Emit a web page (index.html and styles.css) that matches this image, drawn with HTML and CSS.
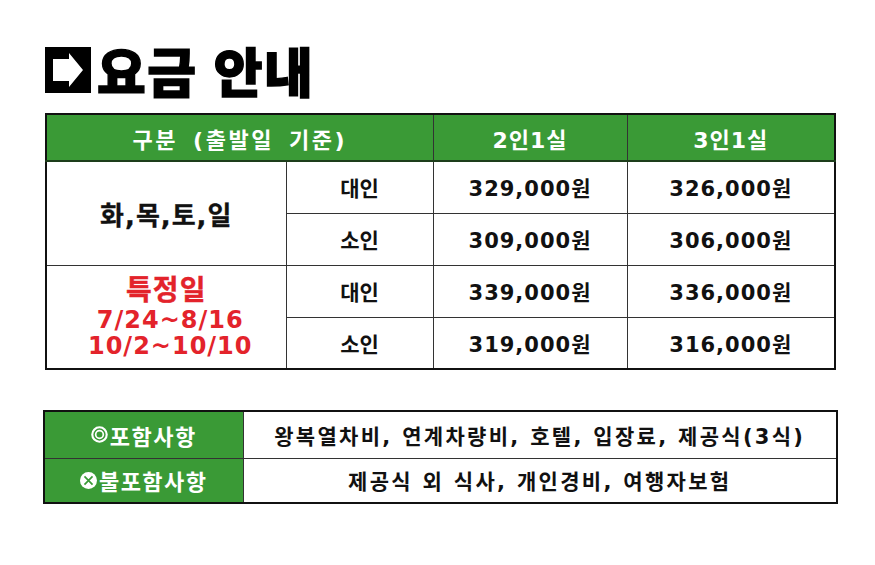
FILE: index.html
```html
<!DOCTYPE html>
<html lang="ko">
<head>
<meta charset="utf-8">
<link rel="stylesheet" href="styles.css">
</head>
<body>
<div class="page">
  <h1 class="title">
    <svg class="title-icon" viewBox="0 0 46 46" width="46" height="46">
      <rect x="0" y="0" width="46" height="46" fill="#000"/>
      <polygon points="8,12 24,12 24,6 38,23 24,40 24,34 8,34" fill="#fff"/>
    </svg>
    <span class="title-text">요금 안내</span>
  </h1>

  <table class="price">
    <colgroup>
      <col class="c1"><col class="c2"><col class="c3"><col class="c4">
    </colgroup>
    <thead>
      <tr class="head">
        <th colspan="2" class="h-wide">구분 (출발일 기준)</th>
        <th>2인1실</th>
        <th>3인1실</th>
      </tr>
    </thead>
    <tbody>
      <tr>
        <td rowspan="2" class="days">화,목,토,일</td>
        <td class="who">대인</td>
        <td class="amt">329,000원</td>
        <td class="amt">326,000원</td>
      </tr>
      <tr>
        <td class="who">소인</td>
        <td class="amt">309,000원</td>
        <td class="amt">306,000원</td>
      </tr>
      <tr>
        <td rowspan="2" class="special">
          <div class="sp-title">특정일</div>
          <div class="sp-date">7/24~8/16</div>
          <div class="sp-date">10/2~10/10</div>
        </td>
        <td class="who">대인</td>
        <td class="amt">339,000원</td>
        <td class="amt">336,000원</td>
      </tr>
      <tr>
        <td class="who">소인</td>
        <td class="amt">319,000원</td>
        <td class="amt">316,000원</td>
      </tr>
    </tbody>
  </table>

  <table class="incl">
    <colgroup><col class="k1"><col class="k2"></colgroup>
    <tr>
      <th><span class="label"><svg class="mark" viewBox="0 0 16 16"><circle cx="8" cy="8" r="6.8" fill="none" stroke="#fff" stroke-width="2"/><circle cx="8" cy="8" r="3.6" fill="none" stroke="#fff" stroke-width="1.6"/></svg>포함사항</span></th>
      <td>왕복열차비, 연계차량비, 호텔, 입장료, 제공식(3식)</td>
    </tr>
    <tr>
      <th><span class="label"><svg class="mark" viewBox="0 0 16 16"><circle cx="8" cy="8" r="8" fill="#fff"/><path d="M4.2 4.2 L11.8 11.8 M11.8 4.2 L4.2 11.8" stroke="#3a9a36" stroke-width="1.6"/></svg>불포함사항</span></th>
      <td>제공식 외 식사, 개인경비, 여행자보험</td>
    </tr>
  </table>
</div>
</body>
</html>
```

FILE: styles.css
```css
html, body {
  margin: 0;
  padding: 0;
  background: #fff;
}

body {
  font-family: "DejaVu Sans", "Noto Sans CJK KR", sans-serif;
  color: #111;
}

.page {
  padding: 47px 0 0 45px;
}

.title {
  display: flex;
  align-items: center;
  gap: 6px;
  margin: 0;
  height: 46px;
}

.title-icon {
  display: block;
  flex: none;
}

.title-text {
  font-family: "Noto Sans CJK KR", sans-serif;
  font-size: 53px;
  font-weight: 900;
  line-height: 46px;
  letter-spacing: 1.5px;
  color: #000;
  -webkit-text-stroke: 1.4px #000;
}

.price {
  margin-top: 20px;
  border-collapse: collapse;
  width: 789px;
  table-layout: fixed;
  border: 2px solid #111;
}

.price .c1 { width: 240px; }
.price .c2 { width: 147px; }
.price .c3 { width: 194px; }
.price .c4 { width: 208px; }

.price th,
.price td {
  border: 1px solid #333;
  text-align: center;
  padding: 0;
}

.price .head th {
  background: #3a9a36;
  color: #fff;
  height: 45px;
  font-size: 22px;
  font-weight: 700;
  letter-spacing: 1px;
  border-bottom: 2px solid #1d3d1b;
}

.price .head .h-wide {
  font-size: 22px;
  letter-spacing: 2.5px;
  word-spacing: 5px;
}

.price tbody tr {
  height: 52px;
}

.who {
  font-size: 21px;
  font-weight: 700;
}

.amt {
  font-size: 21px;
  font-weight: 700;
  letter-spacing: 1px;
}

.days {
  font-size: 26px;
  font-weight: 700;
  letter-spacing: 1px;
  -webkit-text-stroke: 0.3px #111;
}

.special {
  color: #e3232b;
  font-weight: 700;
}

.sp-title {
  font-size: 28px;
  line-height: 32px;
  letter-spacing: 1px;
  -webkit-text-stroke: 0.4px #e3232b;
}

.sp-date {
  font-size: 24px;
  line-height: 26px;
  letter-spacing: 1px;
  padding-left: 8px;
}

.incl {
  margin-top: 40px;
  margin-left: -2px;
  border-collapse: collapse;
  table-layout: fixed;
  width: 793px;
  border: 2px solid #111;
}

.incl .k1 { width: 199px; }
.incl .k2 { width: 594px; }

.incl tr:first-child { height: 47px; }
.incl tr:last-child { height: 45px; }

.incl th,
.incl td {
  border: 1px solid #333;
  text-align: center;
  padding: 0;
  font-size: 21px;
  font-weight: 700;
}

.incl th {
  background: #3a9a36;
  color: #fff;
  font-size: 22px;
  letter-spacing: 1.5px;
}

.incl td {
  letter-spacing: 2.3px;
}

.label {
  display: inline-flex;
  align-items: center;
  gap: 2px;
}

.mark {
  display: block;
  flex: none;
  width: 17px;
  height: 17px;
}
```
